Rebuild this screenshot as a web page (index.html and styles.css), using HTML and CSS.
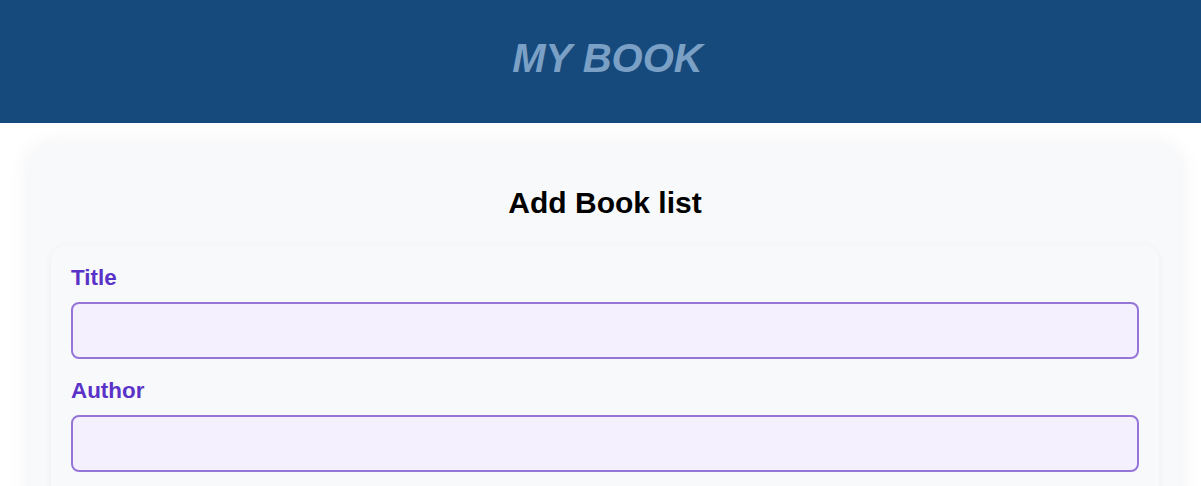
FILE: index.html
```html
<!DOCTYPE html>
<html lang="en">
<head>
<meta charset="utf-8">
<title>My Book</title>
<link rel="stylesheet" href="styles.css">
</head>
<body>
<header class="site-header">
  <h1 class="brand">MY BOOK</h1>
</header>
<main class="card">
  <h2 class="card-title">Add Book list</h2>
  <form class="book-form">
    <label class="field-label" for="title">Title</label>
    <input class="field-input" id="title" type="text">
    <label class="field-label" for="author">Author</label>
    <input class="field-input" id="author" type="text">
  </form>
</main>
</body>
</html>
```
FILE: styles.css
```css
* { box-sizing: border-box; }
html, body { margin: 0; padding: 0; }
body {
  background: #ffffff;
  font-family: "Liberation Sans", Arial, sans-serif;
  overflow: hidden;
}
.site-header {
  height: 123px;
  padding: 0 0 6px 14px;
  background: #174a7c;
  display: flex;
  align-items: center;
  justify-content: center;
}
.brand {
  margin: 0;
  font-size: 40px;
  font-weight: bold;
  font-style: italic;
  color: #7ba0c6;
}
.card {
  margin: 20px 22px 0 31px;
  padding: 43px 20px 20px;
  background: #f8f9fa;
  border-radius: 20px;
  box-shadow: 0 4px 24px rgba(30, 40, 80, 0.08);
}
.card-title {
  margin: 0 0 25px;
  text-align: center;
  font-size: 30px;
  font-weight: bold;
  color: #000;
}
.book-form {
  display: flex;
  flex-direction: column;
  padding: 20px 20px 20px;
  background: #f8f9fb;
  border-radius: 16px;
  box-shadow: 0 2px 8px rgba(30, 40, 80, 0.05);
}
.field-label {
  font-size: 22.4px;
  font-weight: bold;
  color: #5a32c8;
  margin-bottom: 11px;
}
.field-input {
  height: 57px;
  border: 2px solid #9575d8;
  border-radius: 8px;
  background: #f5f0fe;
  margin-bottom: 19px;
  font-size: 18px;
}
```
